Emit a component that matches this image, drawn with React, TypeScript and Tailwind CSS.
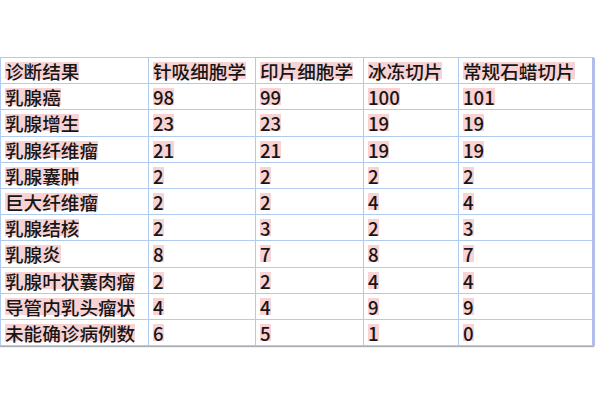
const HEADERS = ['诊断结果', '针吸细胞学', '印片细胞学', '冰冻切片', '常规石蜡切片']

const ROWS: [string, number, number, number, number][] = [
  ['乳腺癌', 98, 99, 100, 101],
  ['乳腺增生', 23, 23, 19, 19],
  ['乳腺纤维瘤', 21, 21, 19, 19],
  ['乳腺囊肿', 2, 2, 2, 2],
  ['巨大纤维瘤', 2, 2, 4, 4],
  ['乳腺结核', 2, 3, 2, 3],
  ['乳腺炎', 8, 7, 8, 7],
  ['乳腺叶状囊肉瘤', 2, 2, 4, 4],
  ['导管内乳头瘤状', 4, 4, 9, 9],
  ['未能确诊病例数', 6, 5, 1, 0],
]

function Cell({ text, last }: { text: string | number; last?: boolean }) {
  return (
    <div
      className={`h-[26.2px] flex items-center pl-[4px] border-b border-[#b0cbef] ${
        last ? 'border-r-[3px] border-r-[#b3bdec]' : 'border-r border-r-[#b0cbef]'
      }`}
    >
      <span className="bg-[#f9d2d3] leading-[17px] text-[18.6px] font-medium text-[#161616]">{text}</span>
    </div>
  )
}

export default function App() {
  return (
    <div
      className="w-[600px] h-[400px] bg-white pt-[57px]"
      style={{ fontFamily: '"Noto Sans CJK SC", "Noto Sans", sans-serif' }}
    >
      <div className="w-[594px] grid grid-cols-[148px_107px_108px_95px_136px] border-t border-l border-[#b0cbef] shadow-[0_1px_1px_#a9acb4]">
        {HEADERS.map((h, i) => (
          <Cell key={h} text={h} last={i === 4} />
        ))}
        {ROWS.map(row =>
          row.map((v, i) => <Cell key={`${row[0]}-${i}`} text={v} last={i === 4} />)
        )}
      </div>
    </div>
  )
}
